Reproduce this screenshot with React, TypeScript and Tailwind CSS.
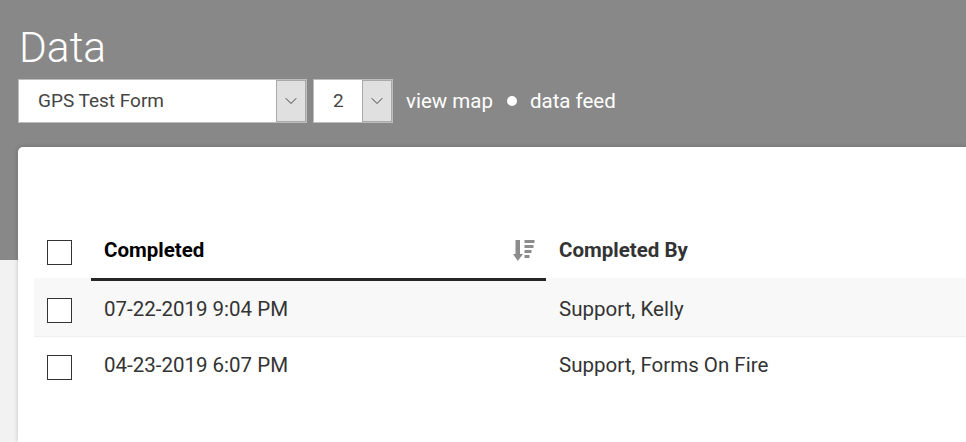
import { ChevronDown } from "lucide-react";

const rows = [
  {
    completed: "07-22-2019 9:04 PM",
    by: "Support, Kelly",
    rowClass: "bg-[#f8f8f8] border-b border-[#eeeeee] h-[59px] pt-[20px]",
    textClass: "-mt-[1px]",
  },
  {
    completed: "04-23-2019 6:07 PM",
    by: "Support, Forms On Fire",
    rowClass: "h-[57px] pt-[18px]",
    textClass: "-mt-[2px]",
  },
];

function Select({ label, width, textClass }: { label: string; width: string; textClass: string }) {
  return (
    <div className={`flex h-[44px] border border-[#bdbdbd] bg-white ${width}`}>
      <div className={`flex-1 text-[19px] leading-[42px] text-[#444] ${textClass}`}>{label}</div>
      <div className="flex w-[30px] items-center justify-center border border-[#a9a9a9] bg-[#e0e0e0]">
        <ChevronDown className="h-[20px] w-[20px] text-[#222]" strokeWidth={1} />
      </div>
    </div>
  );
}

function Checkbox() {
  return <div className="h-[25px] w-[25px] shrink-0 border border-[#333] bg-white" />;
}

function SortIcon() {
  return (
    <svg width="22" height="21" viewBox="0 0 22 21" className="fill-[#8c8c8c]">
      <path d="M2.500 0h4.500v14h3l-5.200 7L0 14h2.500z" />
      <rect x="11.500" y="0" width="10" height="3" />
      <rect x="11.500" y="5" width="9" height="3" />
      <rect x="11.500" y="10" width="7" height="3" />
      <rect x="11.500" y="15" width="5" height="3" />
    </svg>
  );
}

export default function App() {
  return (
    <div className="h-[442px] w-[966px] overflow-hidden bg-[#f2f2f2] font-['Roboto',sans-serif]">
      <header className="h-[260px] bg-[#888888] pl-[18px] pt-[21px]">
        <h1 className="h-[58px] pl-[1px] text-[42.500px] font-light leading-[54px] text-white">Data</h1>
        <div className="flex items-center">
          <Select label="GPS Test Form" width="w-[289px]" textClass="pl-[19px]" />
          <div className="w-[6px]" />
          <Select label="2" width="w-[80px]" textClass="pl-[19px]" />
          <a className="ml-[13px] text-[20.500px] text-white">view map</a>
          <span className="ml-[14px] h-[10px] w-[10px] rounded-full bg-white" />
          <a className="ml-[13px] text-[20.500px] text-white">data feed</a>
        </div>
      </header>

      <main className="ml-[18px] -mt-[113px] h-[295px] rounded-tl-[5px] bg-white pl-[16px] pt-[74px] shadow-[0_0_5px_rgba(0,0,0,0.2)]">
        <div className="relative z-10 -mb-[3px] flex h-[60px] text-[20.500px]">
          <div className="w-[57px] pl-[13px] pt-[19px]">
            <Checkbox />
          </div>
          <div className="flex w-[455px] items-center justify-between border-b-[3px] border-[#262626] pl-[13px] pr-[11px] pt-[1px]">
            <span className="font-bold text-black">Completed</span>
            <SortIcon />
          </div>
          <div className="flex flex-1 items-center pb-[2px] pl-[13px] font-bold text-[#333]">
            Completed By
          </div>
        </div>
        {rows.map((row) => (
          <div key={row.completed} className={`flex text-[20.500px] leading-[25px] text-[#333] ${row.rowClass}`}>
            <div className="w-[57px] pl-[13px]">
              <Checkbox />
            </div>
            <div className={`w-[455px] pl-[13px] ${row.textClass}`}>{row.completed}</div>
            <div className={`flex-1 pl-[13px] ${row.textClass}`}>{row.by}</div>
          </div>
        ))}
      </main>
    </div>
  );
}
